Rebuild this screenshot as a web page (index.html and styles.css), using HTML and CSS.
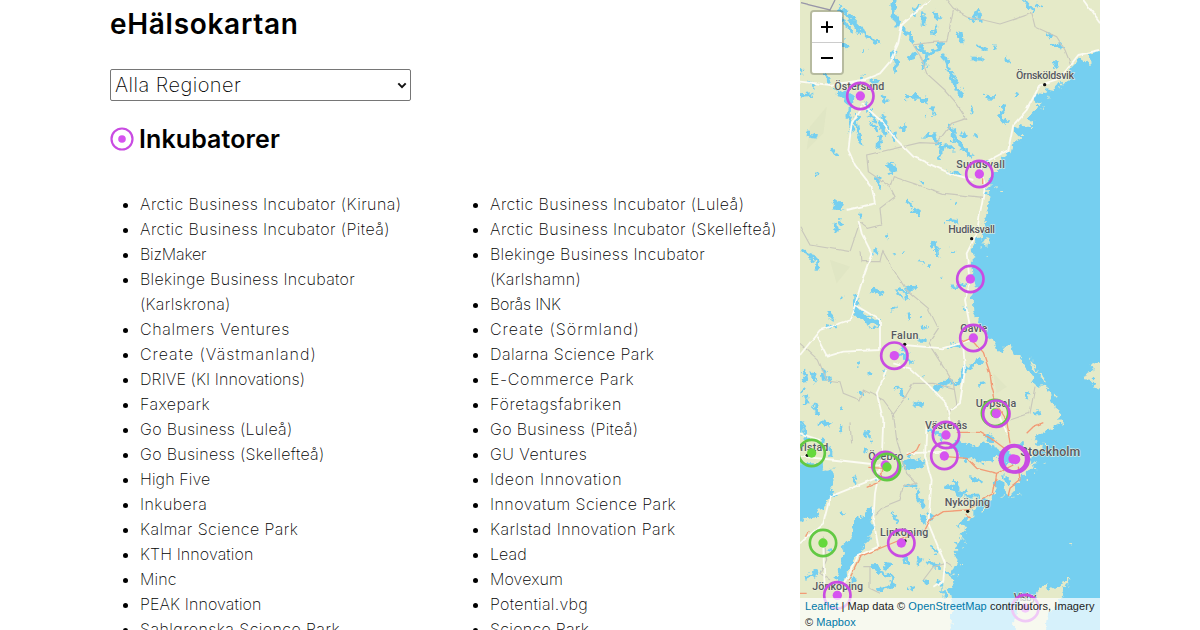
FILE: index.html
```html
<!DOCTYPE html>
<html lang="sv">
<head>
<meta charset="utf-8">
<title>eHälsokartan</title>
<link rel="stylesheet" href="styles.css">
</head>
<body>
<div class="page">
  <main class="content">
    <h1 class="title">eHälsokartan</h1>
    <div class="select-wrap">
      <select class="region-select" aria-label="Region"><option>Alla Regioner</option></select>
      <svg class="chevron" viewBox="0 0 10 7"><path d="M1.3 1.4 5 5.1 8.7 1.4"/></svg>
    </div>
    <h2 class="section-title">
      <svg class="section-icon" viewBox="0 0 24 24"><circle class="ring" cx="12" cy="12" r="10.5"/><circle class="dot" cx="12" cy="12" r="3.8"/></svg>
      <span>Inkubatorer</span>
    </h2>
    <div class="columns">
      <ul class="list">
        <li>Arctic Business Incubator (Kiruna)</li>
        <li>Arctic Business Incubator (Piteå)</li>
        <li class="tighter">BizMaker</li>
        <li class="snug">Blekinge Business Incubator<br>(Karlskrona)</li>
        <li class="wide">Chalmers Ventures</li>
        <li class="wider">Create (Västmanland)</li>
        <li class="tight">DRIVE (KI Innovations)</li>
        <li>Faxepark</li>
        <li class="snug">Go Business (Luleå)</li>
        <li class="snug">Go Business (Skellefteå)</li>
        <li class="tight">High Five</li>
        <li>Inkubera</li>
        <li>Kalmar Science Park</li>
        <li class="tight">KTH Innovation</li>
        <li class="tight">Minc</li>
        <li class="tight">PEAK Innovation</li>
        <li>Sahlgrenska Science Park</li>
      </ul>
      <ul class="list">
        <li>Arctic Business Incubator (Luleå)</li>
        <li>Arctic Business Incubator (Skellefteå)</li>
        <li class="snug">Blekinge Business Incubator<br>(Karlshamn)</li>
        <li class="tighter">Borås INK</li>
        <li class="wider">Create (Sörmland)</li>
        <li>Dalarna Science Park</li>
        <li class="wide">E-Commerce Park</li>
        <li class="wide">Företagsfabriken</li>
        <li class="snug">Go Business (Piteå)</li>
        <li>GU Ventures</li>
        <li class="wide">Ideon Innovation</li>
        <li>Innovatum Science Park</li>
        <li>Karlstad Innovation Park</li>
        <li class="tight">Lead</li>
        <li class="tight">Movexum</li>
        <li class="snug">Potential.vbg</li>
        <li class="snug">Science Park</li>
      </ul>
    </div>
  </main>
  <aside class="map">
    <svg class="map-canvas" viewBox="0 0 900 1890">
      <defs>
        <filter id="rough" x="0" y="0" width="900" height="1890" filterUnits="userSpaceOnUse">
          <feTurbulence type="fractalNoise" baseFrequency="0.05" numOctaves="3" seed="4"/>
          <feDisplacementMap in="SourceGraphic" scale="30" xChannelSelector="R" yChannelSelector="G"/>
        </filter>
        <filter id="wobble" x="0" y="0" width="900" height="1890" filterUnits="userSpaceOnUse">
          <feTurbulence type="fractalNoise" baseFrequency="0.03" numOctaves="2" seed="9"/>
          <feDisplacementMap in="SourceGraphic" scale="10" xChannelSelector="R" yChannelSelector="G"/>
        </filter>
      </defs>
      <rect class="land" width="900" height="1890"/>
      <g class="shade"><path d="M30 380 80 320 70 400 20 450zM90 780 150 800 110 850zM580 1120 620 1160 590 1180z"/></g>
      <g filter="url(#rough)">
        <path class="water" d="M930 140 870 162 872 200 850 180 835 170 815 200 810 225 800 250 775 250 765 270 740 265 735 285 715 280 705 300 725 310 700 330 680 350 700 365 690 385 660 375 640 385 655 405 665 415 640 430 635 460 620 455 600 490 590 520 575 520 570 560 560 570 572 590 565 630 550 670 555 690 548 710 528 720 512 750 520 770 514 795 522 830 528 865 518 885 520 930 527 955 540 965 545 985 560 1005 580 1020 590 1050 605 1055 610 1040 635 1035 640 1060 665 1080 675 1100 690 1120 700 1145 720 1160 735 1155 745 1175 755 1210 780 1230 782 1272 760 1280 720 1305 700 1320 725 1340 700 1360 690 1390 715 1380 700 1400 680 1415 665 1430 650 1450 630 1490 612 1475 610 1450 595 1440 588 1480 570 1495 545 1500 520 1525 520 1545 490 1560 470 1575 500 1580 480 1600 485 1620 465 1630 475 1650 460 1665 475 1685 465 1705 455 1730 465 1750 440 1765 450 1780 455 1805 450 1920 930 1920z"/>
        <path class="water" d="M-20 1390H60L75 1410 100 1405 102 1435 90 1460 95 1490 75 1510 80 1535 60 1525 50 1545 20 1555-20 1575z"/>
        <path class="water" d="M215 1522 222 1535 212 1560 225 1580 205 1610 190 1650 165 1670 150 1700 130 1742 108 1742 120 1700 135 1660 125 1640 150 1615 155 1580 180 1550 200 1535z"/>
        <!-- Mälaren and Hjälmaren -->
        <path class="water" d="M445 1330 475 1318 520 1340 560 1325 590 1345 620 1350 650 1390 610 1395 590 1375 550 1390 520 1375 495 1385 470 1355zM305 1382 340 1375 380 1382 370 1400 330 1412 310 1402z"/>
        <path class="water" d="M160 885 172 890 175 920 205 950 240 955 235 985 195 970 160 935zM92 262 140 275 165 295 150 320 125 300zM272 0 290 0 286 35 305 75 290 80 270 45zM437 665 450 657 470 660 472 675zM98 622 118 605 132 628zM258 495 275 485 290 505 278 522 262 515z"/>
        <g class="lakes">
          <path d="M150 310 145 350 158 375 150 400M170 345 175 400 182 430M200 310 210 350 235 360M245 350 265 380 285 420M255 345 240 375 260 405M215 365 230 395M120 20 145 50 175 80 185 100 235 130M85 45 140 70 155 100M355 5 340 40M372 40 370 80M400 35 415 60M410 80 400 105M305 85 330 110 340 130M275 155 285 185 290 215M350 135 375 160 410 155 425 130 405 125M430 165 445 200 460 235 480 280 490 290M465 100 485 122 482 95M512 60 525 50 535 30 540 65M515 175 545 177M535 138 555 145M580 142 590 143M615 180 625 188M740 100 750 108M755 130 780 138 785 148M755 190 770 196M670 0 685 20 700 35M710 8 720 20M555 290 585 291M605 315 608 340 600 345 625 375M645 280 655 285M510 320 518 345M315 292 350 290 385 300 365 305M250 290 258 308M395 320 402 340M375 345 378 348M487 398 493 408M527 400 530 410M20 403 50 408M0 285 40 282M20 245 45 260M95 445 108 475M0 210 10 220M230 530 245 565M370 408 400 405 420 440 440 435 460 455M450 370 465 420 500 450 515 470M425 440 420 480M445 515 480 525M240 410 238 445M300 380 320 384M190 225 185 245M185 150 190 155M130 125 145 145M210 250 235 240M345 160 330 180M380 160 370 210M50 520 55 525M355 545 365 548M100 605 120 620M320 590 335 625M460 610 470 612M75 225 90 240M555 482 560 498M605 565 590 572M560 575 570 590"/>
          <path d="M0 750 35 765 50 785 53 812M105 670 112 695M120 660 125 670M175 640 182 655M220 755 232 765M260 705 265 715M280 760 285 762M305 757 310 758M340 630 360 645M390 725 410 740 412 775M357 778 365 790M385 795 395 796M420 825 425 830M450 752 465 754M215 868 250 880M290 865 320 885 345 860 315 865 325 900M120 890 130 897M270 930 290 925M325 940 328 955M355 950 360 952M365 982 380 984M85 940 100 960M75 975 110 980M305 1045 325 1065M355 1020 380 1020M290 1065 315 1070 335 1090M205 1115 215 1125M250 1115 255 1120M290 1160 320 1195M370 1125 372 1128M10 1110 20 1150M40 1115 45 1150M70 1110 75 1145M85 1120 90 1145M170 1092 172 1100M180 1170 185 1185M340 1210 365 1215M400 1165 440 1145 475 1150 500 1105 545 1080M410 1168 450 1148M535 1155 550 1152M680 1175 685 1195M15 1190 20 1210M40 1210 55 1240M5 1170 8 1175M125 1220 130 1235M455 860 495 855M490 920 494 935M445 1035 485 1040M700 1240 725 1240"/>
          <path d="M10 1265 20 1320M60 1265 90 1275M70 1310 65 1340M80 1340 95 1365M120 1280 128 1300M0 1275 5 1310M200 1290 210 1320M195 1350 205 1355M245 1355 250 1380M160 1430 170 1450M90 1490 110 1480M120 1530 130 1545M225 1435 245 1430M310 1455 355 1460M350 1470 370 1520M330 1355 335 1370M380 1290 415 1300 430 1325M440 1345 490 1345 520 1330M500 1350 575 1375 600 1350M555 1310 580 1320M380 1540 400 1555M430 1460 475 1465M460 1440 480 1485 500 1465M490 1490 540 1490M510 1440 545 1445M280 1540 290 1565M360 1545 380 1570M350 1595 375 1600M390 1640 410 1655M190 1620 215 1615M215 1695 245 1720 275 1735 280 1760 235 1770M265 1690 260 1710M360 1670 355 1695M380 1690 420 1700M325 1755 345 1770M375 1740 380 1755M310 1670 325 1690M90 1640 95 1660M15 1735 55 1715M155 1730 165 1745M405 1740 430 1760M425 1770 445 1790M430 1710 455 1730M590 1450 593 1475M610 1430 630 1450M660 1330 660 1350"/>
        </g>
        <path class="land" d="M640 1920 645 1820 660 1800 700 1795 720 1760 740 1750 745 1775 780 1760 790 1740 815 1740 800 1755 790 1775 780 1795 765 1820 745 1845 735 1920zM920 1085 880 1090 875 1115 850 1125 852 1138 885 1140 880 1170 900 1165 920 1170zM555 715 565 718 567 735 560 742zM692 1070 708 1100 715 1125 700 1110zM805 1632 815 1635 810 1640z"/>
        <path class="islands" d="M725 325h3M745 290h3M775 265h3M600 572h3M585 565h2M545 745h3M560 765h3M720 1120l12 20M740 1160l10 5M765 1180l5 12M735 1330l8 5M735 1370h4M725 1385l8 3M700 1410l6 3M680 1440h4M655 1480l5 4M640 1490h3M605 1490h3M545 1530h4M500 1600h4M490 1625h4M485 1650h3M480 1690h3M470 1720v10M465 1770h3"/>
      </g>
      <g filter="url(#wobble)">
        <path class="border" d="M440 0 460 25 500 48 600 72 695 40 705 80 770 110 795 150 815 200M460 30 440 125 385 128 340 135 365 175 380 220 435 270 470 310 500 355 455 370 410 430 360 428 200 465 205 515 270 560 280 530 310 540 430 580 550 592M270 560 285 590 240 625 245 675 205 685 180 665 150 755 30 735 0 680M180 755 183 785 240 785 248 750 290 825 320 870 385 925 415 985 385 1030 420 1085 460 1150 470 1210 440 1240M0 1030 55 1080 80 1140 120 1145 130 1180 180 1200 190 1170 250 1200 280 1240 310 1200 340 1150 400 1150 460 1165M705 1160 690 1240 630 1260M150 1270 155 1330M280 1240 290 1320 320 1420 350 1450 310 1460 300 1500 250 1520 220 1550M210 1700 210 1765 240 1780M370 1740 400 1700 440 1690 455 1700M70 1610 80 1680 60 1720 90 1740M190 1700 210 1700"/>
        <path class="road" d="M390 0 305 75 295 130 270 185 240 220 190 240 90 255 0 245M850 0 900 70M900 150 835 165 780 235 720 255 680 330 640 375 625 450 540 495 555 560 540 640 530 700 500 760 510 850 495 900 510 980M185 310 240 360 290 420 340 470 450 520 520 540M185 320 155 370 145 450 165 495 215 560 225 610 140 630M175 660 185 700 215 760 190 830 165 915 150 960 60 990 0 1065M165 915 240 960 240 1050 130 1055 80 1070 50 1010M310 1035 430 1045 480 1030 515 1020M280 1090 330 1105 380 1150 440 1210 450 1270M490 1040 495 1110 480 1210 450 1230M260 1110 230 1180 250 1260 245 1380M0 1370 110 1380 240 1395M240 1400 225 1480 220 1560 235 1640 170 1670 110 1800M60 1320 0 1300M240 1430 90 1490 70 1570 0 1630M380 1270 375 1370 395 1440 385 1570 435 1690 430 1740 400 1760M590 1230 620 1300M320 1360 440 1355M70 1640 75 1800"/>
        <path class="highway" d="M515 1020 550 1060 570 1120 575 1160 590 1215 620 1260 630 1330M480 1030 515 1015M470 1297 540 1297 580 1320 620 1350M440 1370 500 1375 530 1405 590 1420 640 1395M590 1420 580 1480 545 1500M320 1365 350 1350 360 1330M200 1462 240 1445 250 1405 205 1402M545 1500 500 1530 430 1535 390 1560 375 1590 300 1620 180 1670 145 1740M680 1300 700 1280 730 1268M655 1400 660 1440 630 1465 625 1485M0 1780H20M20 1610 28 1590M500 1545 512 1555M548 535V555"/>
        <path class="frontier" d="M0 8 90 30 105 0"/>
      </g>
      <g class="labels">
        <text x="103" y="270" textLength="150">Östersund</text>
        <text x="648" y="238" textLength="174">Örnsköldsvik</text>
        <text x="469" y="504" textLength="146">Sundsvall</text>
        <text x="445" y="700" textLength="140">Hudiksvall</text>
        <text x="273" y="1017" textLength="82">Falun</text>
        <text x="481" y="997" textLength="81">Gävle</text>
        <text x="527" y="1221" textLength="122">Uppsala</text>
        <text x="375" y="1288" textLength="127">Västerås</text>
        <text x="-38" y="1352" textLength="123">Karlstad</text>
        <text x="205" y="1379" textLength="105">Örebro</text>
        <text class="capital" x="661" y="1369" textLength="180">Stockholm</text>
        <text x="434" y="1518" textLength="136">Nyköping</text>
        <text x="240" y="1607" textLength="145">Linköping</text>
        <text x="37" y="1770" textLength="152">Jönköping</text>
        <text x="641" y="1804" textLength="68">Visby</text>
      </g>
      <g class="towns"><circle cx="734" cy="254" r="5"/><circle cx="515" cy="716" r="5"/><circle cx="314" cy="1033" r="5"/><circle cx="503" cy="1534" r="5"/><circle cx="315" cy="1623" r="5"/><circle cx="22" cy="1366" r="5"/></g>
      <g class="pins">
        <g><circle class="ring" cx="181" cy="288" r="39.5"/><circle class="dot" cx="181" cy="288" r="14"/></g>
        <g><circle class="ring" cx="538" cy="522" r="39.5"/><circle class="dot" cx="538" cy="522" r="14"/></g>
        <g><circle class="ring" cx="511" cy="837" r="39.5"/><circle class="dot" cx="511" cy="837" r="14"/></g>
        <g><circle class="ring" cx="520" cy="1014" r="39.5"/><circle class="dot" cx="520" cy="1014" r="14"/></g>
        <g><circle class="ring" cx="283" cy="1067" r="39.5"/><circle class="dot" cx="283" cy="1067" r="14"/></g>
        <g class="green"><circle class="ring" cx="585" cy="1239" r="39.5"/><circle class="dot" cx="585" cy="1239" r="14"/></g>
        <g><circle class="ring" cx="589" cy="1241" r="39.5"/><circle class="dot" cx="589" cy="1241" r="14"/></g>
        <g><circle class="ring" cx="438" cy="1305" r="39.5"/><circle class="dot" cx="438" cy="1305" r="14"/></g>
        <g><circle class="ring" cx="433" cy="1368" r="39.5"/><circle class="dot" cx="433" cy="1368" r="14"/></g>
        <g><circle class="ring" cx="256" cy="1395" r="39.5"/><circle class="dot" cx="256" cy="1395" r="14"/></g>
        <g class="green"><circle class="ring" cx="261" cy="1401" r="39.5"/><circle class="dot" cx="261" cy="1401" r="14"/></g>
        <g class="green"><circle class="ring" cx="35" cy="1359" r="39.5"/><circle class="dot" cx="35" cy="1359" r="14"/></g>
        <g><circle class="ring" cx="639" cy="1377" r="39.5"/><circle class="dot" cx="639" cy="1377" r="14"/></g>
        <g><circle class="ring" cx="647" cy="1378" r="39.5"/><circle class="dot" cx="647" cy="1378" r="14"/></g>
        <g><circle class="ring" cx="643" cy="1375" r="39.5"/></g>
        <g class="green"><circle class="ring" cx="69" cy="1629" r="39.5"/><circle class="dot" cx="69" cy="1629" r="14"/></g>
        <g><circle class="ring" cx="304" cy="1629" r="39.5"/><circle class="dot" cx="304" cy="1629" r="14"/></g>
        <g><circle class="ring" cx="112" cy="1786" r="39.5"/><circle class="dot" cx="112" cy="1786" r="14"/></g>
        <g><circle class="ring" cx="676" cy="1824" r="39.5"/><circle class="dot" cx="676" cy="1824" r="14"/></g>
      </g>
    </svg>
    <div class="zoom">
      <button class="zoom-btn" aria-label="Zooma in"><svg viewBox="0 0 14 14"><path d="M7 1.3V12.7M1 7H13"/></svg></button>
      <button class="zoom-btn" aria-label="Zooma ut"><svg viewBox="0 0 14 14"><path d="M1 7H13"/></svg></button>
    </div>
    <div class="attribution"><a>Leaflet</a> | Map data © <a>OpenStreetMap</a> contributors, Imagery<br>© <a>Mapbox</a></div>
  </aside>
</div>
</body>
</html>
```

FILE: styles.css
```css
* { box-sizing: border-box; }

body {
  margin: 0;
  background: #fff;
  color: #000;
  font-family: Inter, "Open Sans", sans-serif;
  overflow: hidden;
}

.page {
  display: flex;
  height: 630px;
  padding: 0 100px;
  overflow: hidden;
}

.content { width: 700px; padding: 4px 0 0 10px; }

.title, .section-title {
  margin: 0;
  font-weight: 600;
  line-height: 40px;
}

.title { font-size: 28px; letter-spacing: 0.7px; }

.select-wrap { position: relative; width: 301px; height: 32px; margin-top: 25px; }

.region-select {
  width: 100%;
  height: 100%;
  padding: 0 4px;
  appearance: none;
  border: 1px solid #767676;
  border-radius: 2px;
  background: #fff;
  color: #000;
  font: 200 20px Inter, sans-serif;
  letter-spacing: 0.45px;
}

.chevron {
  position: absolute;
  top: 13px;
  right: 4px;
  width: 10px;
  height: 7px;
  fill: none;
  stroke: #111;
  stroke-width: 2;
}

.section-title {
  display: flex;
  align-items: center;
  gap: 5px;
  height: 40px;
  margin-top: 18px;
  font-size: 25px;
  letter-spacing: 0.1px;
}

.section-title span { padding-bottom: 1px; }
.section-icon { width: 24px; height: 24px; }
.ring { fill: none; stroke: #c94be2; stroke-width: 2.2; }
.dot { fill: #d653f0; }

.columns {
  display: grid;
  grid-template-columns: 350px 350px;
  margin: 33px 0 0 -10px;
}

.list {
  margin: 0;
  padding-left: 40px;
  font-size: 16px;
  font-weight: 200;
  line-height: 25px;
  letter-spacing: 0.43px;
  white-space: nowrap;
}

.tighter { letter-spacing: -0.2px; }
.tight { letter-spacing: 0.1px; }
.snug { letter-spacing: 0.3px; }
.wide { letter-spacing: 0.65px; }
.wider { letter-spacing: 0.98px; }

.map { position: relative; width: 300px; height: 630px; overflow: hidden; }
.map-canvas { display: block; width: 300px; height: 630px; }

.land { fill: #e5eac8; }
.shade { fill: #dce2c0; opacity: 0.5; }
.water { fill: #75cff0; }
.lakes { fill: none; stroke: #75cff0; stroke-width: 11; stroke-linejoin: round; }
.islands { fill: none; stroke: #e5eac8; stroke-width: 6; }
.border { fill: none; stroke: #c9c8bc; stroke-width: 3.5; }
.frontier { fill: none; stroke: #9896a8; stroke-width: 4; }
.road { fill: none; stroke: #fbfbf3; stroke-width: 5.5; stroke-linejoin: round; }
.highway { fill: none; stroke: #f29b76; stroke-width: 4; stroke-linejoin: round; }

.labels {
  fill: #555860;
  stroke: #f1f3df;
  stroke-width: 3;
  paint-order: stroke;
  font: 500 32px Roboto, sans-serif;
}

.capital { font-size: 37px; }
.towns { fill: #111; }
.pins .ring { stroke-width: 8; }
.green .ring { stroke: #62c943; }
.green .dot { fill: #65d93d; }

.zoom {
  position: absolute;
  top: 10px;
  left: 10px;
  width: 34px;
  border: 2px solid rgba(0, 0, 0, 0.2);
  border-radius: 4px;
  background-clip: padding-box;
}

.zoom-btn {
  display: grid;
  place-items: center;
  width: 30px;
  height: 30px;
  padding: 0;
  border: 0;
  background: #fff;
}

.zoom-btn:first-child { height: 31px; border-bottom: 1px solid #ccc; border-radius: 2px 2px 0 0; }
.zoom-btn:last-child { border-radius: 0 0 2px 2px; }
.zoom-btn svg { width: 14px; height: 14px; fill: none; stroke: #000; stroke-width: 2; }

.attribution {
  position: absolute;
  left: 0;
  right: 0;
  bottom: 0;
  height: 32px;
  padding: 0 5px;
  background: rgba(255, 255, 255, 0.7);
  color: #222;
  font: 11px/16px "Liberation Sans", sans-serif;
  letter-spacing: 0.06px;
  white-space: nowrap;
}

.attribution a { color: #0078a8; }
```
